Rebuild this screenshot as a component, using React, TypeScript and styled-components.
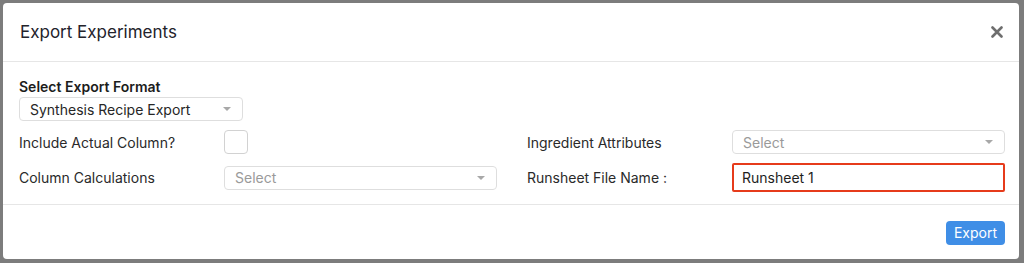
import { createGlobalStyle } from "styled-components";
import styled from "styled-components";

const GlobalStyle = createGlobalStyle`
  html, body {
    margin: 0;
    padding: 0;
    height: 100%;
  }
  body {
    font-family: Inter, "Noto Sans", Arial, sans-serif;
    background: #7c7c7c;
  }
  #root {
    height: 100%;
  }
`;

export default function App() {
  return (
    <>
      <GlobalStyle />
      <Backdrop>
        <Modal>
          <Header>
            <Title>Export Experiments</Title>
            <CloseButton aria-label="Close">
              <svg width="12" height="12" viewBox="0 0 12 12">
                <path
                  d="M1.5 1.5 L10.5 10.5 M10.5 1.5 L1.5 10.5"
                  stroke="#6e6e6e"
                  strokeWidth="2.6"
                  strokeLinecap="round"
                />
              </svg>
            </CloseButton>
          </Header>

          <Body>
            <FormatBlock>
              <FieldTitle>Select Export Format</FieldTitle>
              <SelectBox $width="224px">
                <SelectText>Synthesis Recipe Export</SelectText>
                <Caret />
              </SelectBox>
            </FormatBlock>

            <Grid>
              <FieldRow>
                <Label>Include Actual Column?</Label>
                <Checkbox />
              </FieldRow>
              <FieldRow>
                <Label>Ingredient Attributes</Label>
                <SelectBox>
                  <SelectText $placeholder>Select</SelectText>
                  <Caret />
                </SelectBox>
              </FieldRow>
              <FieldRow>
                <Label>Column Calculations</Label>
                <SelectBox>
                  <SelectText $placeholder>Select</SelectText>
                  <Caret />
                </SelectBox>
              </FieldRow>
              <FieldRow>
                <Label>Runsheet File Name :</Label>
                <TextInput defaultValue="Runsheet 1" />
              </FieldRow>
            </Grid>
          </Body>

          <Footer>
            <PrimaryButton>Export</PrimaryButton>
          </Footer>
        </Modal>
      </Backdrop>
    </>
  );
}

const Backdrop = styled.div`
  height: 100%;
  box-sizing: border-box;
  padding: 3px 5px 4px 3px;
  display: flex;
`;

const Modal = styled.div`
  flex: 1;
  background: #fff;
  border-radius: 4px;
  display: flex;
  flex-direction: column;
  overflow: hidden;
`;

const Header = styled.div`
  height: 59px;
  box-sizing: border-box;
  border-bottom: 1px solid #e6e6e6;
  display: flex;
  align-items: center;
  justify-content: space-between;
  padding: 0 16px 0 17px;
`;

const Title = styled.h2`
  margin: 0;
  font-size: 17px;
  font-weight: 400;
  color: #23232b;
`;

const CloseButton = styled.button`
  border: none;
  background: none;
  padding: 0;
  width: 12px;
  height: 12px;
  display: flex;
  cursor: pointer;
`;

const Body = styled.div`
  padding: 16px 14px 12px 16px;
  border-bottom: 1px solid #e6e6e6;
  display: flex;
  flex-direction: column;
  gap: 9px;
`;

const FormatBlock = styled.div`
  display: flex;
  flex-direction: column;
  gap: 2px;
`;

const FieldTitle = styled.div`
  font-size: 14px;
  line-height: 17px;
  font-weight: 600;
  color: #1c1c1c;
`;

const Grid = styled.div`
  display: grid;
  grid-template-columns: 1fr 1fr;
  column-gap: 30px;
  row-gap: 9px;
  grid-template-rows: 24px 29px;
`;

const FieldRow = styled.div`
  display: grid;
  grid-template-columns: 205px 1fr;
  align-items: center;
`;

const Label = styled.span`
  font-size: 14px;
  color: #2a2a2a;
`;

const SelectBox = styled.div<{ $width?: string }>`
  width: ${(p) => p.$width ?? "100%"};
  height: 24px;
  box-sizing: border-box;
  border: 1px solid #dedede;
  border-radius: 4px;
  display: flex;
  align-items: center;
  justify-content: space-between;
  padding: 0 10px;
`;

const SelectText = styled.span<{ $placeholder?: boolean }>`
  font-size: 14px;
  color: ${(p) => (p.$placeholder ? "#9a9a9a" : "#262626")};
`;

const Caret = styled.span`
  width: 0;
  height: 0;
  border-left: 4px solid transparent;
  border-right: 4px solid transparent;
  border-top: 4px solid #a8a8a8;
  margin-right: 1px;
`;

const Checkbox = styled.span`
  width: 24px;
  height: 24px;
  box-sizing: border-box;
  border: 1px solid #d2d2d2;
  border-radius: 4px;
`;

const TextInput = styled.input`
  height: 29px;
  box-sizing: border-box;
  width: 100%;
  border: 2px solid #e63b1b;
  border-radius: 2px;
  padding: 0 8px;
  font-family: inherit;
  font-size: 14px;
  color: #1e1e1e;
  outline: none;
`;

const Footer = styled.div`
  flex: 1;
  display: flex;
  align-items: center;
  justify-content: flex-end;
  padding: 0 14px;
`;

const PrimaryButton = styled.button`
  height: 24px;
  width: 59px;
  border: none;
  border-radius: 4px;
  background: #3f8ee6;
  color: #fff;
  font-family: inherit;
  font-size: 14px;
  cursor: pointer;
  margin-top: 1px;
`;
